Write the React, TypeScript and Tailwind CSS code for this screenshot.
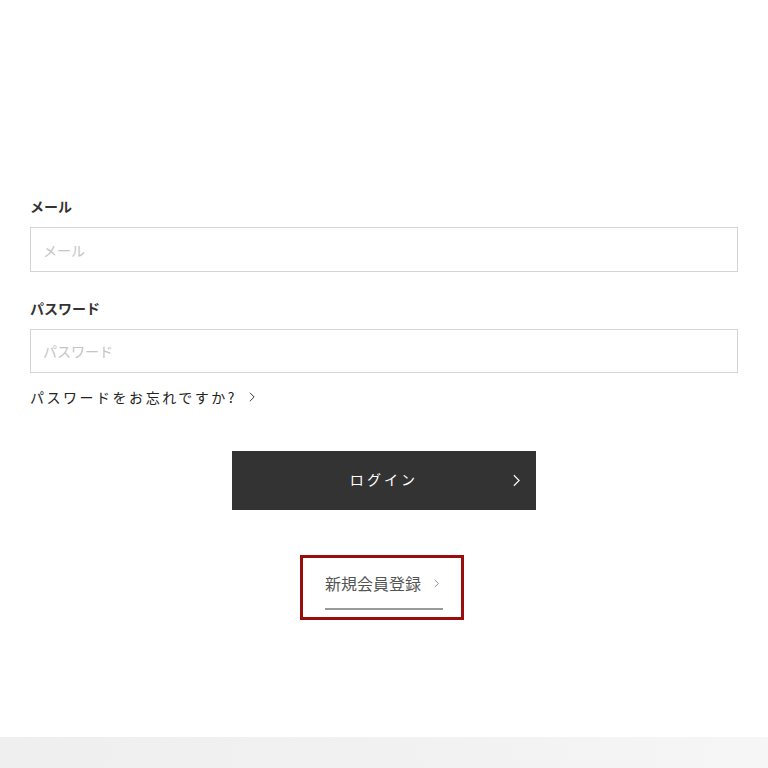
import React from "react";

const Chevron = ({ className, color }: { className?: string; color: string }) => (
  <svg viewBox="0 0 8 14" className={className} fill="none">
    <polyline points="1,1 7,7 1,13" stroke={color} strokeWidth="1.3" />
  </svg>
);

export default function App() {
  return (
    <div
      className="w-[768px] h-[768px] bg-white flex flex-col overflow-hidden"
      style={{ fontFamily: '"Noto Sans CJK JP", "Noto Sans", sans-serif' }}
    >
      <div className="flex-1 flex flex-col px-[30px] pt-[196px]">
        <label className="h-[20px] leading-[20px] text-[14px] font-bold text-[#333]">メール</label>
        <input
          placeholder="メール"
          className="mt-[11px] h-[45px] w-[708px] border border-[#d4d4d4] px-[12px] text-[14px] placeholder:text-[#c4c4c4] outline-none"
        />
        <label className="mt-[26px] h-[20px] leading-[20px] text-[14px] font-bold text-[#333]">パスワード</label>
        <input
          type="text"
          placeholder="パスワード"
          className="mt-[11px] h-[44px] w-[708px] border border-[#d4d4d4] px-[12px] text-[14px] placeholder:text-[#c4c4c4] outline-none"
        />
        <div className="mt-[14px] h-[20px] flex items-center gap-[12px] text-[14px] tracking-[0.18em] text-[#222]">
          <span>パスワードをお忘れですか?</span>
          <Chevron className="w-[6px] h-[10px]" color="#333" />
        </div>
        <div className="mt-[44px] flex justify-center">
          <button className="relative w-[304px] h-[59px] bg-[#333333] text-white text-[14px] tracking-[0.22em] flex items-center justify-center pb-[3px]">
            ログイン
            <Chevron className="absolute right-[16px] top-[23px] w-[7px] h-[13px]" color="#ffffff" />
          </button>
        </div>
        <div className="mt-[45px] flex justify-center pr-[4px]">
          <div className="w-[164px] h-[65px] border-[3px] border-[#9b0d0d] flex flex-col items-center pt-[13px] pl-[4px]">
            <div className="w-[118px] flex items-center gap-[13px] text-[16px] text-[#555] h-[24px]">
              <span>新規会員登録</span>
              <Chevron className="w-[5px] h-[9px]" color="#777" />
            </div>
            <div className="mt-[13px] w-[118px] h-[2px] bg-[#9a9a9a]" />
          </div>
        </div>
      </div>
      <div className="h-[31px] bg-gradient-to-r from-[#efefef] via-[#f1f1f1] to-[#f6f6f6]" />
    </div>
  );
}
